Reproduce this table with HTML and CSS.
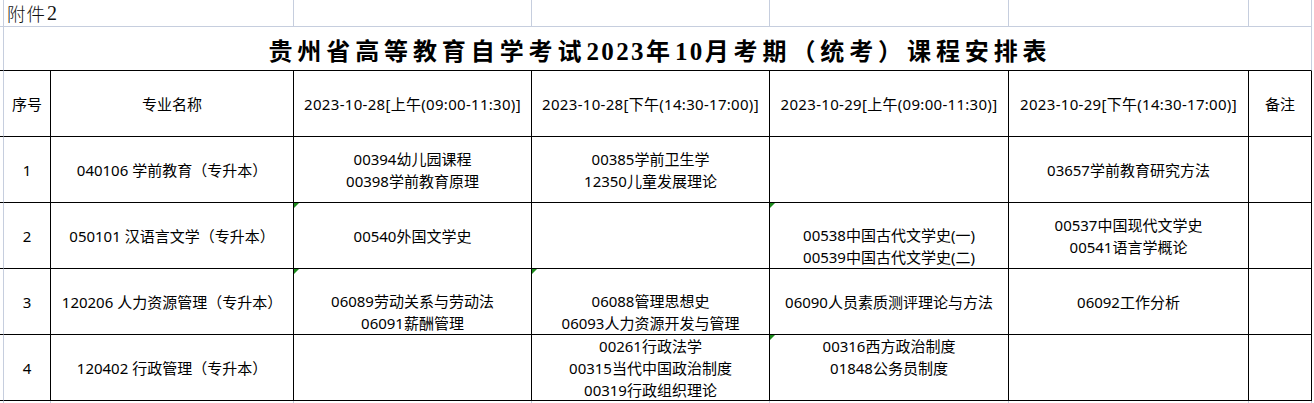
FILE: index.html
```html
<!DOCTYPE html>
<html lang="zh-CN">
<head>
<meta charset="utf-8">
<title>贵州省高等教育自学考试2023年10月考期（统考）课程安排表</title>
<link rel="stylesheet" href="styles.css">
</head>
<body>
<div class="sheet">
  <div class="c sp lg"></div>
  <div class="c lg span2 note"><span class="fj">附件</span><span class="fjn">2</span></div>
  <div class="c lg"></div>
  <div class="c lg"></div>
  <div class="c lg"></div>
  <div class="c lg"></div>
  <div class="c lg"></div>

  <div class="c sp"></div>
  <div class="c title span7"><span class="tt">贵州省高等教育自学考试<span class="num">2023</span>年<span class="num">10</span>月考期（统考）课程安排表</span></div>

  <div class="c sp"></div>
  <div class="c t mid">序号</div>
  <div class="c t mid">专业名称</div>
  <div class="c t mid hd">2023-10-28[上午(09:00-11:30)]</div>
  <div class="c t mid hd">2023-10-28[下午(14:30-17:00)]</div>
  <div class="c t mid hd">2023-10-29[上午(09:00-11:30)]</div>
  <div class="c t mid hd">2023-10-29[下午(14:30-17:00)]</div>
  <div class="c t mid">备注</div>

  <div class="c sp"></div>
  <div class="c t mid">1</div>
  <div class="c t mid">040106 学前教育（专升本）</div>
  <div class="c t mid"><span>00394幼儿园课程</span><span>00398学前教育原理</span></div>
  <div class="c t mid"><span>00385学前卫生学</span><span>12350儿童发展理论</span></div>
  <div class="c t mid"></div>
  <div class="c t mid">03657学前教育研究方法</div>
  <div class="c t mid"></div>

  <div class="c sp"></div>
  <div class="c t mid">2</div>
  <div class="c t mid">050101 汉语言文学（专升本）</div>
  <div class="c t mid flag">00540外国文学史</div>
  <div class="c t mid"></div>
  <div class="c t bot flag"><span>00538中国古代文学史(一)</span><span>00539中国古代文学史(二)</span></div>
  <div class="c t mid"><span>00537中国现代文学史</span><span>00541语言学概论</span></div>
  <div class="c t mid"></div>

  <div class="c sp"></div>
  <div class="c t mid">3</div>
  <div class="c t mid">120206 人力资源管理（专升本）</div>
  <div class="c t bot flag"><span>06089劳动关系与劳动法</span><span>06091薪酬管理</span></div>
  <div class="c t bot flag"><span>06088管理思想史</span><span>06093人力资源开发与管理</span></div>
  <div class="c t mid">06090人员素质测评理论与方法</div>
  <div class="c t mid">06092工作分析</div>
  <div class="c t mid"></div>

  <div class="c sp"></div>
  <div class="c t mid">4</div>
  <div class="c t mid">120402 行政管理（专升本）</div>
  <div class="c t mid"></div>
  <div class="c t mid"><span>00261行政法学</span><span>00315当代中国政治制度</span><span>00319行政组织理论</span></div>
  <div class="c t top flag"><span>00316西方政治制度</span><span>01848公务员制度</span></div>
  <div class="c t mid"></div>
  <div class="c t mid"></div>

  <div class="c sp lg"></div>
  <div class="c lg"></div>
  <div class="c lg"></div>
  <div class="c lg"></div>
  <div class="c lg"></div>
  <div class="c lg"></div>
  <div class="c lg"></div>
  <div class="c lg"></div>
</div>
</body>
</html>
```

FILE: styles.css
```css
html, body {
  margin: 0;
  padding: 0;
  background: #ffffff;
}

body {
  width: 1314px;
  height: 403px;
  overflow: hidden;
  font-family: "Noto Sans", "Noto Sans CJK SC", sans-serif;
  color: #000000;
}

.sheet {
  display: grid;
  grid-template-columns: 4px 47px 243px 238px 238px 239px 240px 63px;
  grid-template-rows: 27px 44px 66px 66px 66px 66px 66px 20px;
  width: 1312px;
}

.c {
  box-sizing: border-box;
  position: relative;
  border-right: 1px solid #000000;
  border-bottom: 1px solid #000000;
  min-width: 0;
}

.c.lg {
  border-right-color: #c6cede;
  border-bottom-color: #c6cede;
}

.sp {
  border-right-color: #c6cede;
}

.span2 { grid-column: span 2; }
.span7 { grid-column: span 7; }

.note {
  display: flex;
  align-items: center;
  padding-left: 3px;
  font-family: "Noto Sans CJK SC", sans-serif;
  font-weight: 300;
  font-size: 18.5px;
  color: #111111;
  white-space: nowrap;
}

.fj {
  letter-spacing: 1px;
}

.fjn {
  font-family: "Liberation Serif", serif;
  font-size: 20px;
  margin-left: 1px;
}

.title {
  border-right-color: #c6cede;
  display: flex;
  align-items: center;
  justify-content: center;
  padding-top: 2px;
}

.tt {
  font-family: "Noto Sans CJK SC", sans-serif;
  font-weight: 700;
  font-size: 24px;
  letter-spacing: 4.9px;
  white-space: nowrap;
  margin-left: 5px;
}

.tt .num {
  font-family: "Liberation Serif", serif;
  font-size: 25px;
  letter-spacing: 2.4px;
}

.t {
  display: flex;
  flex-direction: column;
  align-items: center;
  text-align: center;
  font-size: 15px;
  line-height: 22px;
  white-space: nowrap;
}

.t.mid { justify-content: center; }
.t.bot { justify-content: flex-end; }
.t.top { justify-content: flex-start; }

.hd {
  letter-spacing: 0.3px;
}

.flag::before {
  content: "";
  position: absolute;
  top: 0;
  left: 0;
  width: 0;
  height: 0;
  border-top: 5px solid #1b8a1b;
  border-right: 5px solid transparent;
}
```
